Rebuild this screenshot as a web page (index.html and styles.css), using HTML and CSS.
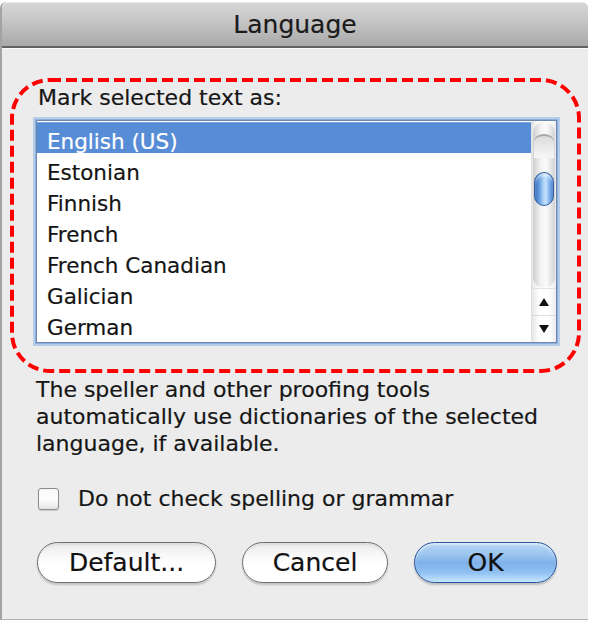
FILE: index.html
```html
<!DOCTYPE html>
<html>
<head>
<meta charset="utf-8">
<link rel="stylesheet" href="styles.css">
</head>
<body>
<div class="window">
  <div class="titlebar">Language</div>
  <div class="content">
    <div class="focus-box">
      <svg class="focus-ring" width="571" height="295" viewBox="0 0 571 295" aria-hidden="true">
        <rect x="2" y="2" width="567" height="291" rx="38" ry="38" fill="none" stroke="#ff0000" stroke-width="4" stroke-dasharray="11 5"/>
      </svg>
      <div class="label">Mark selected text as:</div>
      <div class="listbox">
        <div class="rows">
          <div class="row selected">English (US)</div>
          <div class="row">Estonian</div>
          <div class="row">Finnish</div>
          <div class="row">French</div>
          <div class="row">French Canadian</div>
          <div class="row">Galician</div>
          <div class="row">German</div>
        </div>
        <div class="scrollbar">
          <div class="track">
            <div class="track-cap"></div>
            <div class="thumb"></div>
          </div>
          <div class="arrow up"><span class="tri-up"></span></div>
          <div class="arrow down"><span class="tri-down"></span></div>
        </div>
      </div>
    </div>
    <p class="desc">The speller and other proofing tools automatically use dictionaries of the selected language, if available.</p>
    <label class="check-row"><span class="checkbox"></span><span>Do not check spelling or grammar</span></label>
    <div class="buttons">
      <div class="btn btn-default">Default...</div>
      <div class="btn btn-cancel">Cancel</div>
      <div class="btn btn-ok">OK</div>
    </div>
  </div>
</div>
</body>
</html>
```
FILE: styles.css
```css
html, body {
  margin: 0;
  padding: 0;
  background: #ffffff;
}
body {
  font-family: "DejaVu Sans", "Liberation Sans", sans-serif;
  color: #161616;
  width: 590px;
  height: 623px;
  overflow: hidden;
  -webkit-text-stroke: 0.2px currentColor;
}
.window {
  margin-top: 2px;
  width: 586px;
  height: 617px;
  border-left: 2px solid #a3a3a3;
  border-bottom: 1px solid #b0b0b0;
  border-top-left-radius: 6px;
  border-top-right-radius: 6px;
  background: #ececec;
  overflow: hidden;
}
.titlebar {
  height: 46px;
  box-sizing: border-box;
  border-bottom: 2px solid #636363;
  box-shadow: 0 1px 0 #fafafa;
  background: linear-gradient(#d6d6d6 0%, #c6c6c6 40%, #a9a9a9 100%);
  border-top: 1px solid #e8e8e8;
  border-top-left-radius: 6px;
  text-align: center;
  font-size: 25px;
  line-height: 44px;
  color: #1a1a1a;
}
.content {
  padding: 30px 6px 0 8px;
}
.focus-box {
  position: relative;
  width: 571px;
  box-sizing: border-box;
  padding: 8px 0 30px 4px;
}
.focus-ring {
  position: absolute;
  left: 0;
  top: 0;
  pointer-events: none;
}
.label {
  margin-left: 24px;
  font-size: 22px;
  line-height: 24px;
}
.listbox {
  margin-top: 10px;
  margin-left: 22px;
  width: 521px;
  height: 223px;
  box-sizing: border-box;
  border: 1px solid #6d87ad;
  box-shadow: 0 0 0 1px #8fb0dd, 0 0 0 3px #b6cdea;
  background: #ffffff;
  display: flex;
  overflow: hidden;
}
.rows {
  flex: 1;
  padding-top: 1px;
}
.row {
  height: 31px;
  box-sizing: border-box;
  padding: 8px 0 0 10px;
  font-size: 21.5px;
  line-height: 24px;
  color: #141414;
  white-space: nowrap;
}
.row.selected {
  background: #578cd7;
  border-top: 1px solid #7aa3df;
  padding-top: 7px;
  color: #ffffff;
}
.scrollbar {
  width: 24px;
  display: flex;
  flex-direction: column;
  background: linear-gradient(to right, #e6e6e6, #ffffff 30%, #ffffff 70%, #ececec);
  border-left: 1px solid #e0e0e0;
}
.track {
  flex: 1;
  margin: 1px 1px 0 1px;
  border-radius: 11px;
  background: linear-gradient(to right, #cfcfcf, #f2f2f2 35%, #fbfbfb 60%, #d3d3d3);
  display: flex;
  flex-direction: column;
  align-items: center;
}
.track-cap {
  width: 20px;
  height: 22px;
  margin-top: 12px;
  border-top-left-radius: 10px 8px;
  border-top-right-radius: 10px 8px;
  border-top: 2px solid #a8a8a8;
  background: linear-gradient(#dcdcdc, #f7f7f7);
}
.thumb {
  width: 20px;
  height: 34px;
  margin-top: 14px;
  box-sizing: border-box;
  border-radius: 10px;
  border: 1px solid #34609f;
  background: linear-gradient(to right, #2b63b6 0%, #5b94db 20%, #a9d0f7 45%, #c6e3ff 60%, #6ea6e6 85%, #3670bf 100%);
  box-shadow: inset 0 3px 3px rgba(255,255,255,0.5);
}
.arrow {
  height: 26px;
  display: flex;
  align-items: center;
  justify-content: center;
}
.arrow.up {
  border-top: 1px solid #e2e2e2;
}
.arrow.down {
  border-top: 1px solid #dcdcdc;
}
.tri-up {
  width: 0;
  height: 0;
  border-left: 5px solid transparent;
  border-right: 5px solid transparent;
  border-bottom: 8px solid #111;
}
.tri-down {
  width: 0;
  height: 0;
  border-left: 5px solid transparent;
  border-right: 5px solid transparent;
  border-top: 8px solid #111;
}
.desc {
  margin: 3px 0 0 26px;
  width: 540px;
  font-size: 22px;
  line-height: 27px;
}
.check-row {
  display: flex;
  align-items: center;
  gap: 19px;
  margin: 30px 0 0 28px;
  height: 24px;
  font-size: 22px;
  line-height: 24px;
}
.checkbox {
  width: 21px;
  height: 22px;
  box-sizing: border-box;
  border: 1px solid #8c8c8c;
  border-radius: 3px;
  background: linear-gradient(#f7f7f7, #ffffff 50%, #e4e4e4);
  box-shadow: 0 1px 1px rgba(0,0,0,0.15);
}
.buttons {
  display: flex;
  gap: 26px;
  margin: 31px 0 0 27px;
}
.btn {
  height: 41px;
  box-sizing: border-box;
  border-radius: 21px;
  border: 1px solid #6f6f6f;
  font-size: 25px;
  line-height: 39px;
  text-align: center;
  color: #111;
  background: linear-gradient(#e9e9e9 0%, #f8f8f8 30%, #ffffff 55%, #ffffff 100%);
  box-shadow: 0 2px 2px rgba(0,0,0,0.18), inset 0 -2px 3px rgba(255,255,255,0.9), inset 0 2px 2px rgba(0,0,0,0.06);
}
.btn-default { width: 179px; }
.btn-cancel { width: 146px; }
.btn-ok {
  width: 143px;
  border-color: #28549a;
  background: linear-gradient(#b7d6f4 0%, #9cc5ef 30%, #7fb2ea 50%, #8fc0f2 75%, #c7e6ff 100%);
  box-shadow: 0 2px 2px rgba(0,0,0,0.2), inset 0 2px 2px rgba(255,255,255,0.5);
}
```
